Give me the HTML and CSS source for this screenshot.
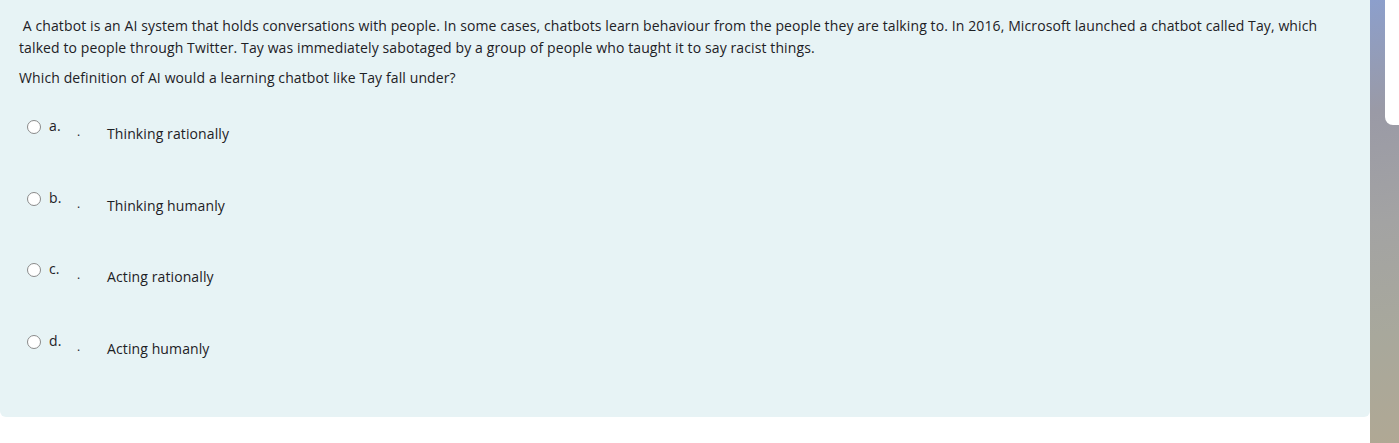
FILE: index.html
```html
<!DOCTYPE html>
<html>
<head>
<meta charset="utf-8">
<link rel="stylesheet" href="styles.css">
</head>
<body>
<div class="page">
  <main class="main">
    <section class="question">
      <div class="qtext">
        <p class="intro">&nbsp;A chatbot is an AI system that holds conversations with people. In some cases, chatbots learn behaviour from the people they are talking to. In 2016, Microsoft launched a chatbot called Tay, which talked to people through Twitter. Tay was immediately sabotaged by a group of people who taught it to say racist things.</p>
        <p class="prompt">Which definition of AI would a learning chatbot like Tay fall under?</p>
      </div>
      <div class="answers">
        <label class="option"><span class="radio"></span><span class="letter">a.</span><span class="dot">.</span><span class="text">Thinking rationally</span></label>
        <label class="option"><span class="radio"></span><span class="letter">b.</span><span class="dot">.</span><span class="text">Thinking humanly</span></label>
        <label class="option"><span class="radio"></span><span class="letter">c.</span><span class="dot">.</span><span class="text">Acting rationally</span></label>
        <label class="option"><span class="radio"></span><span class="letter">d.</span><span class="dot">.</span><span class="text">Acting humanly</span></label>
      </div>
    </section>
  </main>
  <aside class="side">
    <div class="drawer"></div>
  </aside>
</div>
</body>
</html>
```
FILE: styles.css
```css
html, body {
  margin: 0;
  padding: 0;
  height: 100%;
}
body {
  font-family: "Open Sans", "Noto Sans", sans-serif;
  font-size: 14px;
  letter-spacing: 0.11px;
  color: #1d2125;
  background: #fff;
}
.page {
  display: flex;
  height: 443px;
  overflow: hidden;
}
.main {
  width: 1370px;
  flex: none;
  background: #fff;
}
.question {
  background: #e7f3f5;
  height: 417px;
  box-sizing: border-box;
  border-radius: 0 0 6px 6px;
  padding: 15px 19px 0 19px;
}
.qtext p {
  margin: 0;
  line-height: 22px;
}
.prompt {
  margin-top: 8px !important;
}
.answers {
  display: flex;
  flex-direction: column;
  padding-top: 29px;
}
.option {
  display: flex;
  align-items: flex-start;
  height: 71.5px;
  padding-left: 8px;
}
.radio {
  width: 12px;
  height: 12px;
  border: 1px solid #8a8a8a;
  border-radius: 50%;
  background: #fff;
  margin-top: 2px;
  flex: none;
}
.letter {
  margin-left: 8px;
  line-height: 16px;
  width: 28px;
}
.dot {
  font-size: 12px;
  line-height: 16px;
  margin-top: 6px;
  width: 30px;
  color: #1d2125;
}
.text {
  line-height: 16px;
  margin-top: 8px;
}
.side {
  flex: 1;
  background: linear-gradient(170deg, #8c9fcc 0%, #9a9aa6 25%, #a3a3a3 50%, #a8a89c 75%, #b0a894 100%);
  display: flex;
  justify-content: flex-end;
  align-items: flex-start;
}
.drawer {
  width: 14px;
  height: 125px;
  background: #fff;
  border-bottom-left-radius: 8px;
}
```
